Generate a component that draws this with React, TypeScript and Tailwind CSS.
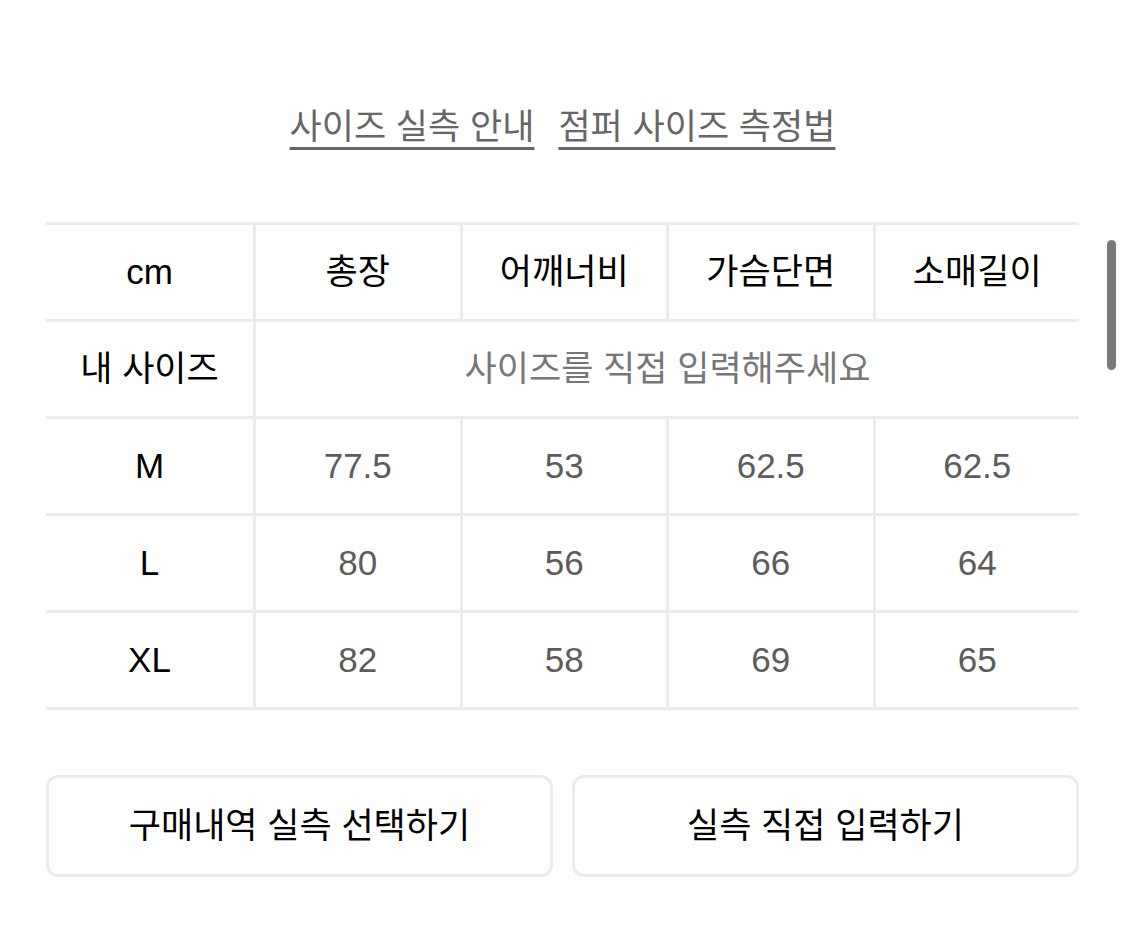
import React from 'react';

const font = { fontFamily: '"Liberation Sans", "Noto Sans CJK KR", sans-serif' };

const headers = ['총장', '어깨너비', '가슴단면', '소매길이'];
const rows: { size: string; values: string[] }[] = [
  { size: 'M', values: ['77.5', '53', '62.5', '62.5'] },
  { size: 'L', values: ['80', '56', '66', '64'] },
  { size: 'XL', values: ['82', '58', '69', '65'] },
];

const Row: React.FC<{ children: React.ReactNode; last?: boolean }> = ({ children, last }) => (
  <div
    className={
      'flex border-t-[3px] border-[#ececec]' + (last ? ' h-[100px] border-b-[3px]' : ' h-[97px]')
    }
  >
    {children}
  </div>
);

export default function App() {
  return (
    <div className="relative w-[1125px] h-[942px] bg-white" style={font}>
      {/* guide links */}
      <div className="flex justify-center gap-[24px] pt-[103px] text-[35px] leading-[48px] text-[#666]">
        <span className="underline decoration-[3px] underline-offset-[8px]">사이즈 실측 안내</span>
        <span className="underline decoration-[3px] underline-offset-[8px]">점퍼 사이즈 측정법</span>
      </div>

      {/* size table */}
      <div className="ml-[46px] mt-[71px] w-[1033px] text-[35px]">
        <Row>
          <div className="w-[207px] flex items-center justify-center text-black">cm</div>
          {headers.map(h => (
            <div key={h} className="flex-1 flex items-center justify-center border-l-[3px] border-[#ececec] text-black">
              {h}
            </div>
          ))}
        </Row>
        <Row>
          <div className="w-[207px] flex items-center justify-center text-black">내 사이즈</div>
          <div className="flex-1 flex items-center justify-center border-l-[3px] border-[#ececec] text-[#777]">
            사이즈를 직접 입력해주세요
          </div>
        </Row>
        {rows.map((r, i) => (
          <Row key={r.size} last={i === rows.length - 1}>
            <div className="w-[207px] flex items-center justify-center text-black">{r.size}</div>
            {r.values.map((v, j) => (
              <div key={j} className="flex-1 flex items-center justify-center border-l-[3px] border-[#ececec] text-[#5c5c5c]">
                {v}
              </div>
            ))}
          </Row>
        ))}
      </div>

      {/* actions */}
      <div className="ml-[46px] mt-[65px] w-[1033px] flex gap-[19px]">
        <button className="flex-1 h-[102px] rounded-[12px] border-[3px] border-[#ececec] bg-white text-[35px] text-black">
          구매내역 실측 선택하기
        </button>
        <button className="flex-1 h-[102px] rounded-[12px] border-[3px] border-[#ececec] bg-white text-[35px] text-black">
          실측 직접 입력하기
        </button>
      </div>

      {/* scrollbar thumb */}
      <div className="absolute left-[1107px] top-[240px] w-[9px] h-[130px] rounded-full bg-[#7a7a7a]" />
    </div>
  );
}
